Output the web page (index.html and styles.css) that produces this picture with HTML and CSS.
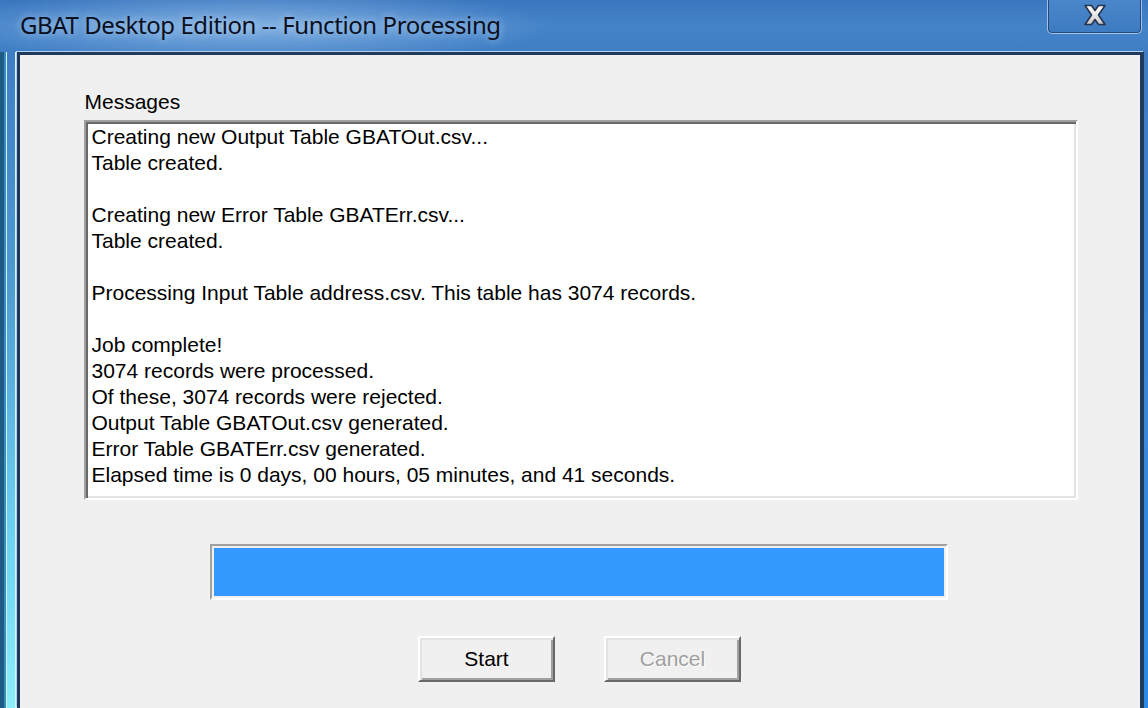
FILE: index.html
```html
<!DOCTYPE html>
<html>
<head>
<meta charset="utf-8">
<title>GBAT Desktop Edition -- Function Processing</title>
<link rel="stylesheet" href="styles.css">
</head>
<body>
<div class="window">
  <div class="titlebar">
    <div class="title">GBAT Desktop Edition -- Function Processing</div>
    <div class="close-btn">
      <svg width="24" height="22" viewBox="0 0 24 22">
        <defs>
          <linearGradient id="xg" x1="0" y1="0" x2="0" y2="1">
            <stop offset="0" stop-color="#ffffff"/>
            <stop offset="0.5" stop-color="#e8e8e8"/>
            <stop offset="1" stop-color="#c8c8c8"/>
          </linearGradient>
        </defs>
        <polygon points="2,1.5 8.5,1.5 12,6.5 15.5,1.5 22,1.5 15.5,11 22,20.5 15.5,20.5 12,15.5 8.5,20.5 2,20.5 8.5,11" fill="url(#xg)" stroke="#27344d" stroke-width="1.6" stroke-linejoin="round"/>
      </svg>
    </div>
  </div>
  <div class="frame-body">
    <div class="side side-left"></div>
    <div class="client">
      <div class="messages-group">
        <div class="label">Messages</div>
        <div class="messages">
          <div class="line">Creating new Output Table GBATOut.csv...</div>
          <div class="line">Table created.</div>
          <div class="line">&nbsp;</div>
          <div class="line">Creating new Error Table GBATErr.csv...</div>
          <div class="line">Table created.</div>
          <div class="line">&nbsp;</div>
          <div class="line">Processing Input Table address.csv. This table has 3074 records.</div>
          <div class="line">&nbsp;</div>
          <div class="line">Job complete!</div>
          <div class="line">3074 records were processed.</div>
          <div class="line">Of these, 3074 records were rejected.</div>
          <div class="line">Output Table GBATOut.csv generated.</div>
          <div class="line">Error Table GBATErr.csv generated.</div>
          <div class="line">Elapsed time is 0 days, 00 hours, 05 minutes, and 41 seconds.</div>
        </div>
      </div>
      <div class="progress">
        <div class="progress-fill"></div>
      </div>
      <div class="buttons">
        <div class="btn">Start</div>
        <div class="btn disabled">Cancel</div>
      </div>
    </div>
    <div class="side side-right"></div>
  </div>
</div>
</body>
</html>
```

FILE: styles.css
```css
html, body {
  margin: 0;
  padding: 0;
  width: 1148px;
  height: 708px;
  overflow: hidden;
}

.window {
  width: 1148px;
  height: 708px;
  display: flex;
  flex-direction: column;
  background: #3f7cc3;
}

.titlebar {
  height: 52px;
  flex: none;
  display: flex;
  align-items: flex-start;
  background:
    radial-gradient(ellipse 300px 40px at 250px 26px, rgba(200, 230, 255, 0.45), rgba(200, 230, 255, 0) 100%),
    linear-gradient(to bottom, #3a76bf 0%, #4583c9 50%, #3f7ec5 100%);
}

.title {
  font-family: "Noto Sans", "Open Sans", sans-serif;
  font-size: 24px;
  color: #0a0f1e;
  padding-left: 20px;
  padding-top: 8px;
  line-height: 34px;
  letter-spacing: -0.42px;
  text-shadow: 0 0 8px rgba(220, 240, 255, 0.7);
  white-space: nowrap;
}

.close-btn {
  margin-left: auto;
  margin-right: 6px;
  width: 93px;
  height: 34px;
  margin-top: -1px;
  border: 1px solid #9fc2ea;
  border-top: none;
  border-radius: 0 0 5px 5px;
  box-shadow: inset 0 0 0 1px #24497a;
  background: linear-gradient(to bottom, #4a86c9, #3d7bc2);
  display: flex;
  align-items: center;
  justify-content: center;
}

.close-btn svg {
  display: block;
  margin-top: -2px;
}

.frame-body {
  flex: 1;
  display: flex;
  min-height: 0;
}

.side-left {
  width: 17px;
  flex: none;
  background:
    linear-gradient(to right, #1d5b86 0px, #1d5b86 4px, #3a8bb8 4px, #3a8bb8 6px, #cdf6ff 6px, #cdf6ff 7px, transparent 7px, transparent 15px, #cdf6ff 15px),
    linear-gradient(to bottom, #3f7cc3 0%, #4f9ad2 35%, #6fd3f2 75%, #8cedfb 100%);
}

.side-right {
  width: 4px;
  flex: none;
  background: linear-gradient(to bottom, #3f7cc3 0%, #3a88d8 60%, #2a8ae6 100%);
}

.client {
  flex: 1;
  background: #f0f0f0;
  border-left: 3px solid #1f3a5a;
  border-top: 3px solid #1f3a5a;
  border-right: 4px solid #1f3a5a;
  box-shadow: -1px -1px 0 0 #b4d2f0;
  display: flex;
  flex-direction: column;
  align-items: center;
  padding-top: 35px;
  font-family: "Liberation Sans", Arial, sans-serif;
  font-size: 21px;
  color: #000;
}

.messages-group {
  width: 994px;
  margin-left: 1px;
}

.label {
  line-height: 24px;
  height: 24px;
  margin-bottom: 6px;
  padding-left: 1px;
}

.messages {
  height: 374px;
  background: #fff;
  border-top: 2px solid #a0a0a0;
  border-left: 2px solid #a0a0a0;
  border-bottom: 2px solid #ffffff;
  border-right: 2px solid #ffffff;
  box-shadow: inset 2px 2px 0 0 #696969, inset -2px -2px 0 0 #e3e3e3;
  padding: 2px 6px 0 6px;
}

.line {
  line-height: 26px;
  height: 26px;
  white-space: nowrap;
}

.progress {
  margin-top: 44px;
  width: 738px;
  height: 56px;
  box-sizing: border-box;
  border-top: 2px solid #a0a0a0;
  border-left: 2px solid #a0a0a0;
  border-bottom: 2px solid #ffffff;
  border-right: 2px solid #ffffff;
  padding: 2px;
  margin-left: -2px;
}

.progress-fill {
  width: 100%;
  height: 100%;
  background: #3399ff;
}

.buttons {
  margin-top: 36px;
  display: flex;
  gap: 49px;
  margin-left: -1px;
}

.btn {
  width: 137px;
  height: 46px;
  box-sizing: border-box;
  border-top: 2px solid #ffffff;
  border-left: 2px solid #ffffff;
  border-bottom: 2px solid #696969;
  border-right: 2px solid #696969;
  box-shadow: inset 2px 2px 0 0 #e3e3e3, inset -2px -2px 0 0 #a0a0a0;
  background: #f0f0f0;
  display: flex;
  align-items: center;
  justify-content: center;
  line-height: 24px;
}

.btn.disabled {
  color: #a0a0a0;
  text-shadow: 1px 1px 0 #ffffff;
}
```
